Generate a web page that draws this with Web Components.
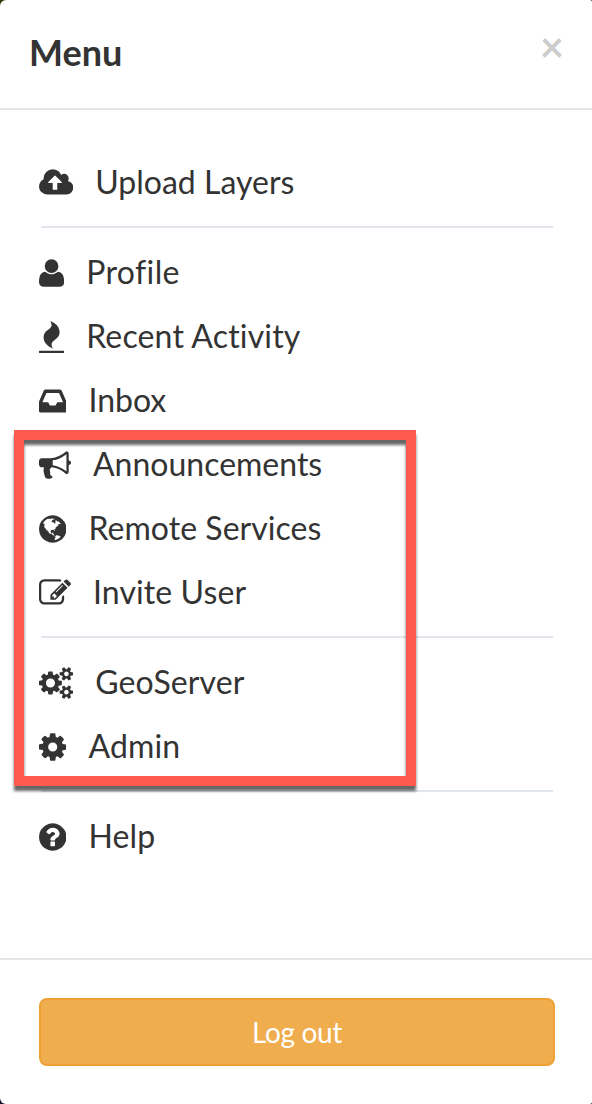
<!DOCTYPE html>
<html lang="en">
<head>
<meta charset="utf-8">
<title>Menu</title>
<style>
html,body{margin:0;height:100%}
body{background:linear-gradient(#303407,#101624);font-family:Lato,"Liberation Sans",sans-serif;font-variant-ligatures:none;color:#333;overflow:hidden}
</style>
</head>
<body>
<menu-panel>
  <panel-title slot="header">Menu</panel-title>
  <menu-item icon="upload">Upload Layers</menu-item>
  <menu-divider></menu-divider>
  <menu-item icon="user" style="--tracking:.38px">Profile</menu-item>
  <menu-item icon="fire" style="--tracking:.17px">Recent Activity</menu-item>
  <menu-item icon="inbox">Inbox</menu-item>
  <menu-item icon="bullhorn">Announcements</menu-item>
  <menu-item icon="globe" style="--tracking:.05px">Remote Services</menu-item>
  <menu-item icon="edit" style="--tracking:.1px">Invite User</menu-item>
  <menu-divider></menu-divider>
  <menu-item icon="cogs" style="--tracking:.13px">GeoServer</menu-item>
  <menu-item icon="cog" style="--tracking:.15px">Admin</menu-item>
  <menu-divider></menu-divider>
  <menu-item icon="help" style="--tracking:.15px">Help</menu-item>
  <action-button slot="footer">Log out</action-button>
</menu-panel>
<highlight-frame></highlight-frame>
<script>
// Icon outlines: [advance width, path], y axis up, baseline at 0, 1792 units per em.
const ICONS = {
  upload:[1920,"M1280 672q0 14 -9 23l-352 352q-9 9 -23 9t-23 -9l-351 -351q-10 -12 -10 -24q0 -14 9 -23t23 -9h224v-352q0 -13 9.5 -22.5t22.5 -9.5h192q13 0 22.5 9.5t9.5 22.5v352h224q13 0 22.5 9.5t9.5 22.5zM1920 384q0 -159 -112.5 -271.5t-271.5 -112.5h-1088q-185 0 -316.5 131.5t-131.5 316.5q0 130 70 240t188 165q-2 30 -2 43q0 212 150 362t362 150q156 0 285.5 -87t188.5 -231q71 62 166 62q106 0 181 -75t75 -181q0 -76 -41 -138q130 -31 213.5 -135.5t83.5 -238.5z"],
  user:[1408,"M1408 131q0 -120 -73 -189.5t-194 -69.5h-874q-121 0 -194 69.5t-73 189.5q0 53 3.5 103.5t14 109t26.5 108.5t43 97.5t62 81t85.5 53.5t111.5 20q9 0 42 -21.5t74.5 -48t108 -48t133.5 -21.5t133.5 21.5t108 48t74.5 48t42 21.5q61 0 111.5 -20t85.5 -53.5t62 -81t43 -97.5t26.5 -108.5t14 -109t3.5 -103.5zM1088 1024q0 -159 -112.5 -271.5t-271.5 -112.5t-271.5 112.5t-112.5 271.5t112.5 271.5t271.5 112.5t271.5 -112.5t112.5 -271.5z"],
  fire:[1408,"M1408 -160v-64q0 -13 -9.5 -22.5t-22.5 -9.5h-1344q-13 0 -22.5 9.5t-9.5 22.5v64q0 13 9.5 22.5t22.5 9.5h1344q13 0 22.5 -9.5t9.5 -22.5zM1152 896q0 -78 -24.5 -144t-64 -112.5t-87.5 -88t-96 -77.5t-87.5 -72t-64 -81.5t-24.5 -96.5q0 -96 67 -224l-4 1l1 -1q-90 41 -160 83t-138.5 100t-113.5 122.5t-72.5 150.5t-27.5 184q0 78 24.5 144t64 112.5t87.5 88t96 77.5t87.5 72t64 81.5t24.5 96.5q0 94 -66 224l3 -1l-1 1q90 -41 160 -83t138.5 -100t113.5 -122.5t72.5 -150.5t27.5 -184z"],
  inbox:[1536,"M1023 576h316q-1 3 -2.5 8t-2.5 8l-212 496h-708l-212 -496q-1 -2 -2.5 -8t-2.5 -8h316l95 -192h320zM1536 546v-482q0 -26 -19 -45t-45 -19h-1408q-26 0 -45 19t-19 45v482q0 62 25 123l238 552q10 25 36.5 42t52.5 17h832q26 0 52.5 -17t36.5 -42l238 -552q25 -61 25 -123z"],
  bullhorn:[1792,"M1664 896q53 0 90.5 -37.5t37.5 -90.5t-37.5 -90.5t-90.5 -37.5v-384q0 -52 -38 -90t-90 -38q-417 347 -812 380q-58 -19 -91 -66t-31 -100.5t40 -92.5q-20 -33 -23 -65.5t6 -58t33.5 -55t48 -50t61.5 -50.5q-29 -58 -111.5 -83t-168.5 -11.5t-132 55.5q-7 23 -29.5 87.5t-32 94.5t-23 89t-15 101t3.5 98.5t22 110.5h-122q-66 0 -113 47t-47 113v192q0 66 47 113t113 47h480q435 0 896 384q52 0 90 -38t38 -90v-384zM1536 292v954q-394 -302 -768 -343v-270q377 -42 768 -341z"],
  globe:[1536,"M768 1408q209 0 385.5 -103t279.5 -279.5t103 -385.5t-103 -385.5t-279.5 -279.5t-385.5 -103t-385.5 103t-279.5 279.5t-103 385.5t103 385.5t279.5 279.5t385.5 103zM1042 887q-2 -1 -9.5 -9.5t-13.5 -9.5q2 0 4.5 5t5 11t3.5 7q6 7 22 15q14 6 52 12q34 8 51 -11q-2 2 9.5 13t14.5 12q3 2 15 4.5t15 7.5l2 22q-12 -1 -17.5 7t-6.5 21q0 -2 -6 -8q0 7 -4.5 8t-11.5 -1t-9 -1q-10 3 -15 7.5t-8 16.5t-4 15q-2 5 -9.5 11t-9.5 10q-1 2 -2.5 5.5t-3 6.5t-4 5.5t-5.5 2.5t-7 -5t-7.5 -10t-4.5 -5q-3 2 -6 1.5t-4.5 -1t-4.5 -3t-5 -3.5q-3 -2 -8.5 -3t-8.5 -2q15 5 -1 11q-10 4 -16 3q9 4 7.5 12t-8.5 14h5q-1 4 -8.5 8.5t-17.5 8.5t-13 6q-8 5 -34 9.5t-33 0.5q-5 -6 -4.5 -10.5t4 -14t3.5 -12.5q1 -6 -5.5 -13t-6.5 -12q0 -7 14 -15.5t10 -21.5q-3 -8 -16 -16t-16 -12q-5 -8 -1.5 -18.5t10.5 -16.5q2 -2 1.5 -4t-3.5 -4.5t-5.5 -4t-6.5 -3.5l-3 -2q-11 -5 -20.5 6t-13.5 26q-7 25 -16 30q-23 8 -29 -1q-5 13 -41 26q-25 9 -58 4q6 1 0 15q-7 15 -19 12q3 6 4 17.5t1 13.5q3 13 12 23q1 1 7 8.5t9.5 13.5t0.5 6q35 -4 50 11q5 5 11.5 17t10.5 17q9 6 14 5.5t14.5 -5.5t14.5 -5q14 -1 15.5 11t-7.5 20q12 -1 3 17q-5 7 -8 9q-12 4 -27 -5q-8 -4 2 -8q-1 1 -9.5 -10.5t-16.5 -17.5t-16 5q-1 1 -5.5 13.5t-9.5 13.5q-8 0 -16 -15q3 8 -11 15t-24 8q19 12 -8 27q-7 4 -20.5 5t-19.5 -4q-5 -7 -5.5 -11.5t5 -8t10.5 -5.5t11.5 -4t8.5 -3q14 -10 8 -14q-2 -1 -8.5 -3.5t-11.5 -4.5t-6 -4q-3 -4 0 -14t-2 -14q-5 5 -9 17.5t-7 16.5q7 -9 -25 -6l-10 1q-4 0 -16 -2t-20.5 -1t-13.5 8q-4 8 0 20q1 4 4 2q-4 3 -11 9.5t-10 8.5q-46 -15 -94 -41q6 -1 12 1q5 2 13 6.5t10 5.5q34 14 42 7l5 5q14 -16 20 -25q-7 4 -30 1q-20 -6 -22 -12q7 -12 5 -18q-4 3 -11.5 10t-14.5 11t-15 5q-16 0 -22 -1q-146 -80 -235 -222q7 -7 12 -8q4 -1 5 -9t2.5 -11t11.5 3q9 -8 3 -19q1 1 44 -27q19 -17 21 -21q3 -11 -10 -18q-1 2 -9 9t-9 4q-3 -5 0.5 -18.5t10.5 -12.5q-7 0 -9.5 -16t-2.5 -35.5t-1 -23.5l2 -1q-3 -12 5.5 -34.5t21.5 -19.5q-13 -3 20 -43q6 -8 8 -9q3 -2 12 -7.5t15 -10t10 -10.5q4 -5 10 -22.5t14 -23.5q-2 -6 9.5 -20t10.5 -23q-1 0 -2.5 -1t-2.5 -1q3 -7 15.5 -14t15.5 -13q1 -3 2 -10t3 -11t8 -2q2 20 -24 62q-15 25 -17 29q-3 5 -5.5 15.5t-4.5 14.5q2 0 6 -1.5t8.5 -3.5t7.5 -4t2 -3q-3 -7 2 -17.5t12 -18.5t17 -19t12 -13q6 -6 14 -19.5t0 -13.5q9 0 20 -10t17 -20q5 -8 8 -26t5 -24q2 -7 8.5 -13.5t12.5 -9.5l16 -8t13 -7q5 -2 18.5 -10.5t21.5 -11.5q10 -4 16 -4t14.5 2.5t13.5 3.5q15 2 29 -15t21 -21q36 -19 55 -11q-2 -1 0.5 -7.5t8 -15.5t9 -14.5t5.5 -8.5q5 -6 18 -15t18 -15q6 4 7 9q-3 -8 7 -20t18 -10q14 3 14 32q-31 -15 -49 18q0 1 -2.5 5.5t-4 8.5t-2.5 8.5t0 7.5t5 3q9 0 10 3.5t-2 12.5t-4 13q-1 8 -11 20t-12 15q-5 -9 -16 -8t-16 9q0 -1 -1.5 -5.5t-1.5 -6.5q-13 0 -15 1q1 3 2.5 17.5t3.5 22.5q1 4 5.5 12t7.5 14.5t4 12.5t-4.5 9.5t-17.5 2.5q-19 -1 -26 -20q-1 -3 -3 -10.5t-5 -11.5t-9 -7q-7 -3 -24 -2t-24 5q-13 8 -22.5 29t-9.5 37q0 10 2.5 26.5t3 25t-5.5 24.5q3 2 9 9.5t10 10.5q2 1 4.5 1.5t4.5 0t4 1.5t3 6q-1 1 -4 3q-3 3 -4 3q7 -3 28.5 1.5t27.5 -1.5q15 -11 22 2q0 1 -2.5 9.5t-0.5 13.5q5 -27 29 -9q3 -3 15.5 -5t17.5 -5q3 -2 7 -5.5t5.5 -4.5t5 0.5t8.5 6.5q10 -14 12 -24q11 -40 19 -44q7 -3 11 -2t4.5 9.5t0 14t-1.5 12.5l-1 8v18l-1 8q-15 3 -18.5 12t1.5 18.5t15 18.5q1 1 8 3.5t15.5 6.5t12.5 8q21 19 15 35q7 0 11 9q-1 0 -5 3t-7.5 5t-4.5 2q9 5 2 16q5 3 7.5 11t7.5 10q9 -12 21 -2q8 8 1 16q5 7 20.5 10.5t18.5 9.5q7 -2 8 2t1 12t3 12q4 5 15 9t13 5l17 11q3 4 0 4q18 -2 31 11q10 11 -6 20q3 6 -3 9.5t-15 5.5q3 1 11.5 0.5t10.5 1.5q15 10 -7 16q-17 5 -43 -12zM879 10q206 36 351 189q-3 3 -12.5 4.5t-12.5 3.5q-18 7 -24 8q1 7 -2.5 13t-8 9t-12.5 8t-11 7q-2 2 -7 6t-7 5.5t-7.5 4.5t-8.5 2t-10 -1l-3 -1q-3 -1 -5.5 -2.5t-5.5 -3t-4 -3t0 -2.5q-21 17 -36 22q-5 1 -11 5.5t-10.5 7t-10 1.5t-11.5 -7q-5 -5 -6 -15t-2 -13q-7 5 0 17.5t2 18.5q-3 6 -10.5 4.5t-12 -4.5t-11.5 -8.5t-9 -6.5t-8.5 -5.5t-8.5 -7.5q-3 -4 -6 -12t-5 -11q-2 4 -11.5 6.5t-9.5 5.5q2 -10 4 -35t5 -38q7 -31 -12 -48q-27 -25 -29 -40q-4 -22 12 -26q0 -7 -8 -20.5t-7 -21.5q0 -6 2 -16z"],
  edit:[1792,"M888 352l116 116l-152 152l-116 -116v-56h96v-96h56zM1328 1072q-16 16 -33 -1l-350 -350q-17 -17 -1 -33t33 1l350 350q17 17 1 33zM1408 478v-190q0 -119 -84.5 -203.5t-203.5 -84.5h-832q-119 0 -203.5 84.5t-84.5 203.5v832q0 119 84.5 203.5t203.5 84.5h832q63 0 117 -25q15 -7 18 -23q3 -17 -9 -29l-49 -49q-14 -14 -32 -8q-23 6 -45 6h-832q-66 0 -113 -47t-47 -113v-832q0 -66 47 -113t113 -47h832q66 0 113 47t47 113v126q0 13 9 22l64 64q15 15 35 7t20 -29zM1312 1216l288 -288l-672 -672h-288v288zM1756 1084l-92 -92l-288 288l92 92q28 28 68 28t68 -28l152 -152q28 -28 28 -68t-28 -68z"],
  cogs:[1920,"M896 640q0 106 -75 181t-181 75t-181 -75t-75 -181t75 -181t181 -75t181 75t75 181zM1664 128q0 52 -38 90t-90 38t-90 -38t-38 -90q0 -53 37.5 -90.5t90.5 -37.5t90.5 37.5t37.5 90.5zM1664 1152q0 52 -38 90t-90 38t-90 -38t-38 -90q0 -53 37.5 -90.5t90.5 -37.5t90.5 37.5t37.5 90.5zM1280 731v-185q0 -10 -7 -19.5t-16 -10.5l-155 -24q-11 -35 -32 -76q34 -48 90 -115q7 -10 7 -20q0 -12 -7 -19q-23 -30 -82.5 -89.5t-78.5 -59.5q-11 0 -21 7l-115 90q-37 -19 -77 -31q-11 -108 -23 -155q-7 -24 -30 -24h-186q-11 0 -20 7.5t-10 17.5l-23 153q-34 10 -75 31l-118 -89q-7 -7 -20 -7q-11 0 -21 8q-144 133 -144 160q0 9 7 19q10 14 41 53t47 61q-23 44 -35 82l-152 24q-10 1 -17 9.5t-7 19.5v185q0 10 7 19.5t16 10.5l155 24q11 35 32 76q-34 48 -90 115q-7 11 -7 20q0 12 7 20q22 30 82 89t79 59q11 0 21 -7l115 -90q34 18 77 32q11 108 23 154q7 24 30 24h186q11 0 20 -7.5t10 -17.5l23 -153q34 -10 75 -31l118 89q8 7 20 7q11 0 21 -8q144 -133 144 -160q0 -9 -7 -19q-12 -16 -42 -54t-45 -60q23 -48 34 -82l152 -23q10 -2 17 -10.5t7 -19.5zM1920 198v-140q0 -16 -149 -31q-12 -27 -30 -52q51 -113 51 -138q0 -4 -4 -7q-122 -71 -124 -71q-8 0 -46 47t-52 68q-20 -2 -30 -2t-30 2q-14 -21 -52 -68t-46 -47q-2 0 -124 71q-4 3 -4 7q0 25 51 138q-18 25 -30 52q-149 15 -149 31v140q0 16 149 31q13 29 30 52q-51 113 -51 138q0 4 4 7q4 2 35 20t59 34t30 16q8 0 46 -46.5t52 -67.5q20 2 30 2t30 -2q51 71 92 112l6 2q4 0 124 -70q4 -3 4 -7q0 -25 -51 -138q17 -23 30 -52q149 -15 149 -31zM1920 1222v-140q0 -16 -149 -31q-12 -27 -30 -52q51 -113 51 -138q0 -4 -4 -7q-122 -71 -124 -71q-8 0 -46 47t-52 68q-20 -2 -30 -2t-30 2q-14 -21 -52 -68t-46 -47q-2 0 -124 71q-4 3 -4 7q0 25 51 138q-18 25 -30 52q-149 15 -149 31v140q0 16 149 31q13 29 30 52q-51 113 -51 138q0 4 4 7q4 2 35 20t59 34t30 16q8 0 46 -46.5t52 -67.5q20 2 30 2t30 -2q51 71 92 112l6 2q4 0 124 -70q4 -3 4 -7q0 -25 -51 -138q17 -23 30 -52q149 -15 149 -31z"],
  cog:[1536,"M1024 640q0 106 -75 181t-181 75t-181 -75t-75 -181t75 -181t181 -75t181 75t75 181zM1536 749v-222q0 -12 -8 -23t-20 -13l-185 -28q-19 -54 -39 -91q35 -50 107 -138q10 -12 10 -25t-9 -23q-27 -37 -99 -108t-94 -71q-12 0 -26 9l-138 108q-44 -23 -91 -38q-16 -136 -29 -186q-7 -28 -36 -28h-222q-14 0 -24.5 8.5t-11.5 21.5l-28 184q-49 16 -90 37l-141 -107q-10 -9 -25 -9q-14 0 -25 11q-126 114 -165 168q-7 10 -7 23q0 12 8 23q15 21 51 66.5t54 70.5q-27 50 -41 99l-183 27q-13 2 -21 12.5t-8 23.5v222q0 12 8 23t19 13l186 28q14 46 39 92q-40 57 -107 138q-10 12 -10 24q0 10 9 23q26 36 98.5 107.5t94.5 71.5q13 0 26 -10l138 -107q44 23 91 38q16 136 29 186q7 28 36 28h222q14 0 24.5 -8.5t11.5 -21.5l28 -184q49 -16 90 -37l142 107q9 9 24 9q13 0 25 -10q129 -119 165 -170q7 -8 7 -22q0 -12 -8 -23q-15 -21 -51 -66.5t-54 -70.5q26 -50 41 -98l183 -28q13 -2 21 -12.5t8 -23.5z"],
  help:[1536,"M896 160v192q0 14 -9 23t-23 9h-192q-14 0 -23 -9t-9 -23v-192q0 -14 9 -23t23 -9h192q14 0 23 9t9 23zM1152 832q0 88 -55.5 163t-138.5 116t-170 41q-243 0 -371 -213q-15 -24 8 -42l132 -100q7 -6 19 -6q16 0 25 12q53 68 86 92q34 24 86 24q48 0 85.5 -26t37.5 -59q0 -38 -20 -61t-68 -45q-63 -28 -115.5 -86.5t-52.5 -125.5v-36q0 -14 9 -23t23 -9h192q14 0 23 9t9 23q0 19 21.5 49.5t54.5 49.5q32 18 49 28.5t46 35t44.5 48t28 60.5t12.5 81zM1536 640q0 -209 -103 -385.5t-279.5 -279.5t-385.5 -103t-385.5 103t-279.5 279.5t-103 385.5t103 385.5t279.5 279.5t385.5 103t385.5 -103t279.5 -279.5t103 -385.5z"]
};

function define(name, html, setup) {
  customElements.define(name, class extends HTMLElement {
    constructor() {
      super();
      this.attachShadow({mode:"open"});
    }
    connectedCallback() {
      this.shadowRoot.innerHTML = html;
      if (setup) setup(this);
    }
  });
}

define("menu-panel", `
<style>
:host{display:flex;flex-direction:column;box-sizing:border-box;width:592px;height:1104px;background:#fff;border-radius:6px 2px 2px 6px}
header{box-sizing:border-box;height:110px;border-bottom:2px solid #e5e5e5;padding:0 28px 0 29px;display:flex;justify-content:space-between}
nav{flex:1;padding:40px 39px 0 39px}
footer{box-sizing:border-box;height:146px;border-top:2px solid #e5e5e5;padding:38px 37px 0 39px}
</style>
<header><slot name="header"></slot><close-button></close-button></header>
<nav><slot></slot></nav>
<footer><slot name="footer"></slot></footer>`);

define("panel-title", `
<style>:host{display:block;font-weight:700;font-size:36px;line-height:44px;padding-top:30px}</style>
<slot></slot>`);

define("close-button", `
<style>
:host{display:block}
button{all:unset;display:block;font-weight:700;font-size:42px;line-height:42px;color:#ccc;padding-top:25px}
</style>
<button aria-label="Close">×</button>`);

define("menu-item", `
<style>
:host{display:flex;align-items:center;height:64px;font-size:32px;line-height:44px}
svg{display:block;height:32px;flex:none;margin:1px 22px 0 0}
span{letter-spacing:var(--tracking,0)}
</style>
<svg aria-hidden="true"><path fill="#333" transform="translate(0 1536) scale(1 -1)"/></svg><span><slot></slot></span>`,
host => {
  const [w, d] = ICONS[host.getAttribute("icon")];
  const svg = host.shadowRoot.querySelector("svg");
  svg.setAttribute("viewBox", `0 0 ${w} 1792`);
  svg.style.width = w / 56 + "px";
  svg.querySelector("path").setAttribute("d", d);
});

define("menu-divider", `
<style>:host{display:block;height:2px;margin:12px 0 12px 2px;background:#e0e6eb}</style>`);

define("action-button", `
<style>
:host{display:block}
button{all:unset;box-sizing:border-box;display:block;width:100%;height:68px;border:2px solid #eea236;border-radius:8px;background:#f0ad4e;color:#fff;font-size:28px;letter-spacing:-.35px;line-height:62px;text-align:center}
</style>
<button><slot></slot></button>`);

// Callout laid over a group of menu entries.
define("highlight-frame", `
<style>:host{position:absolute;left:14px;top:430px;width:402px;height:356px;box-sizing:border-box;border:10px solid #ff5a4d;filter:drop-shadow(0 5px 1.5px rgba(0,0,0,.6));pointer-events:none}</style>`);
</script>
</body>
</html>
